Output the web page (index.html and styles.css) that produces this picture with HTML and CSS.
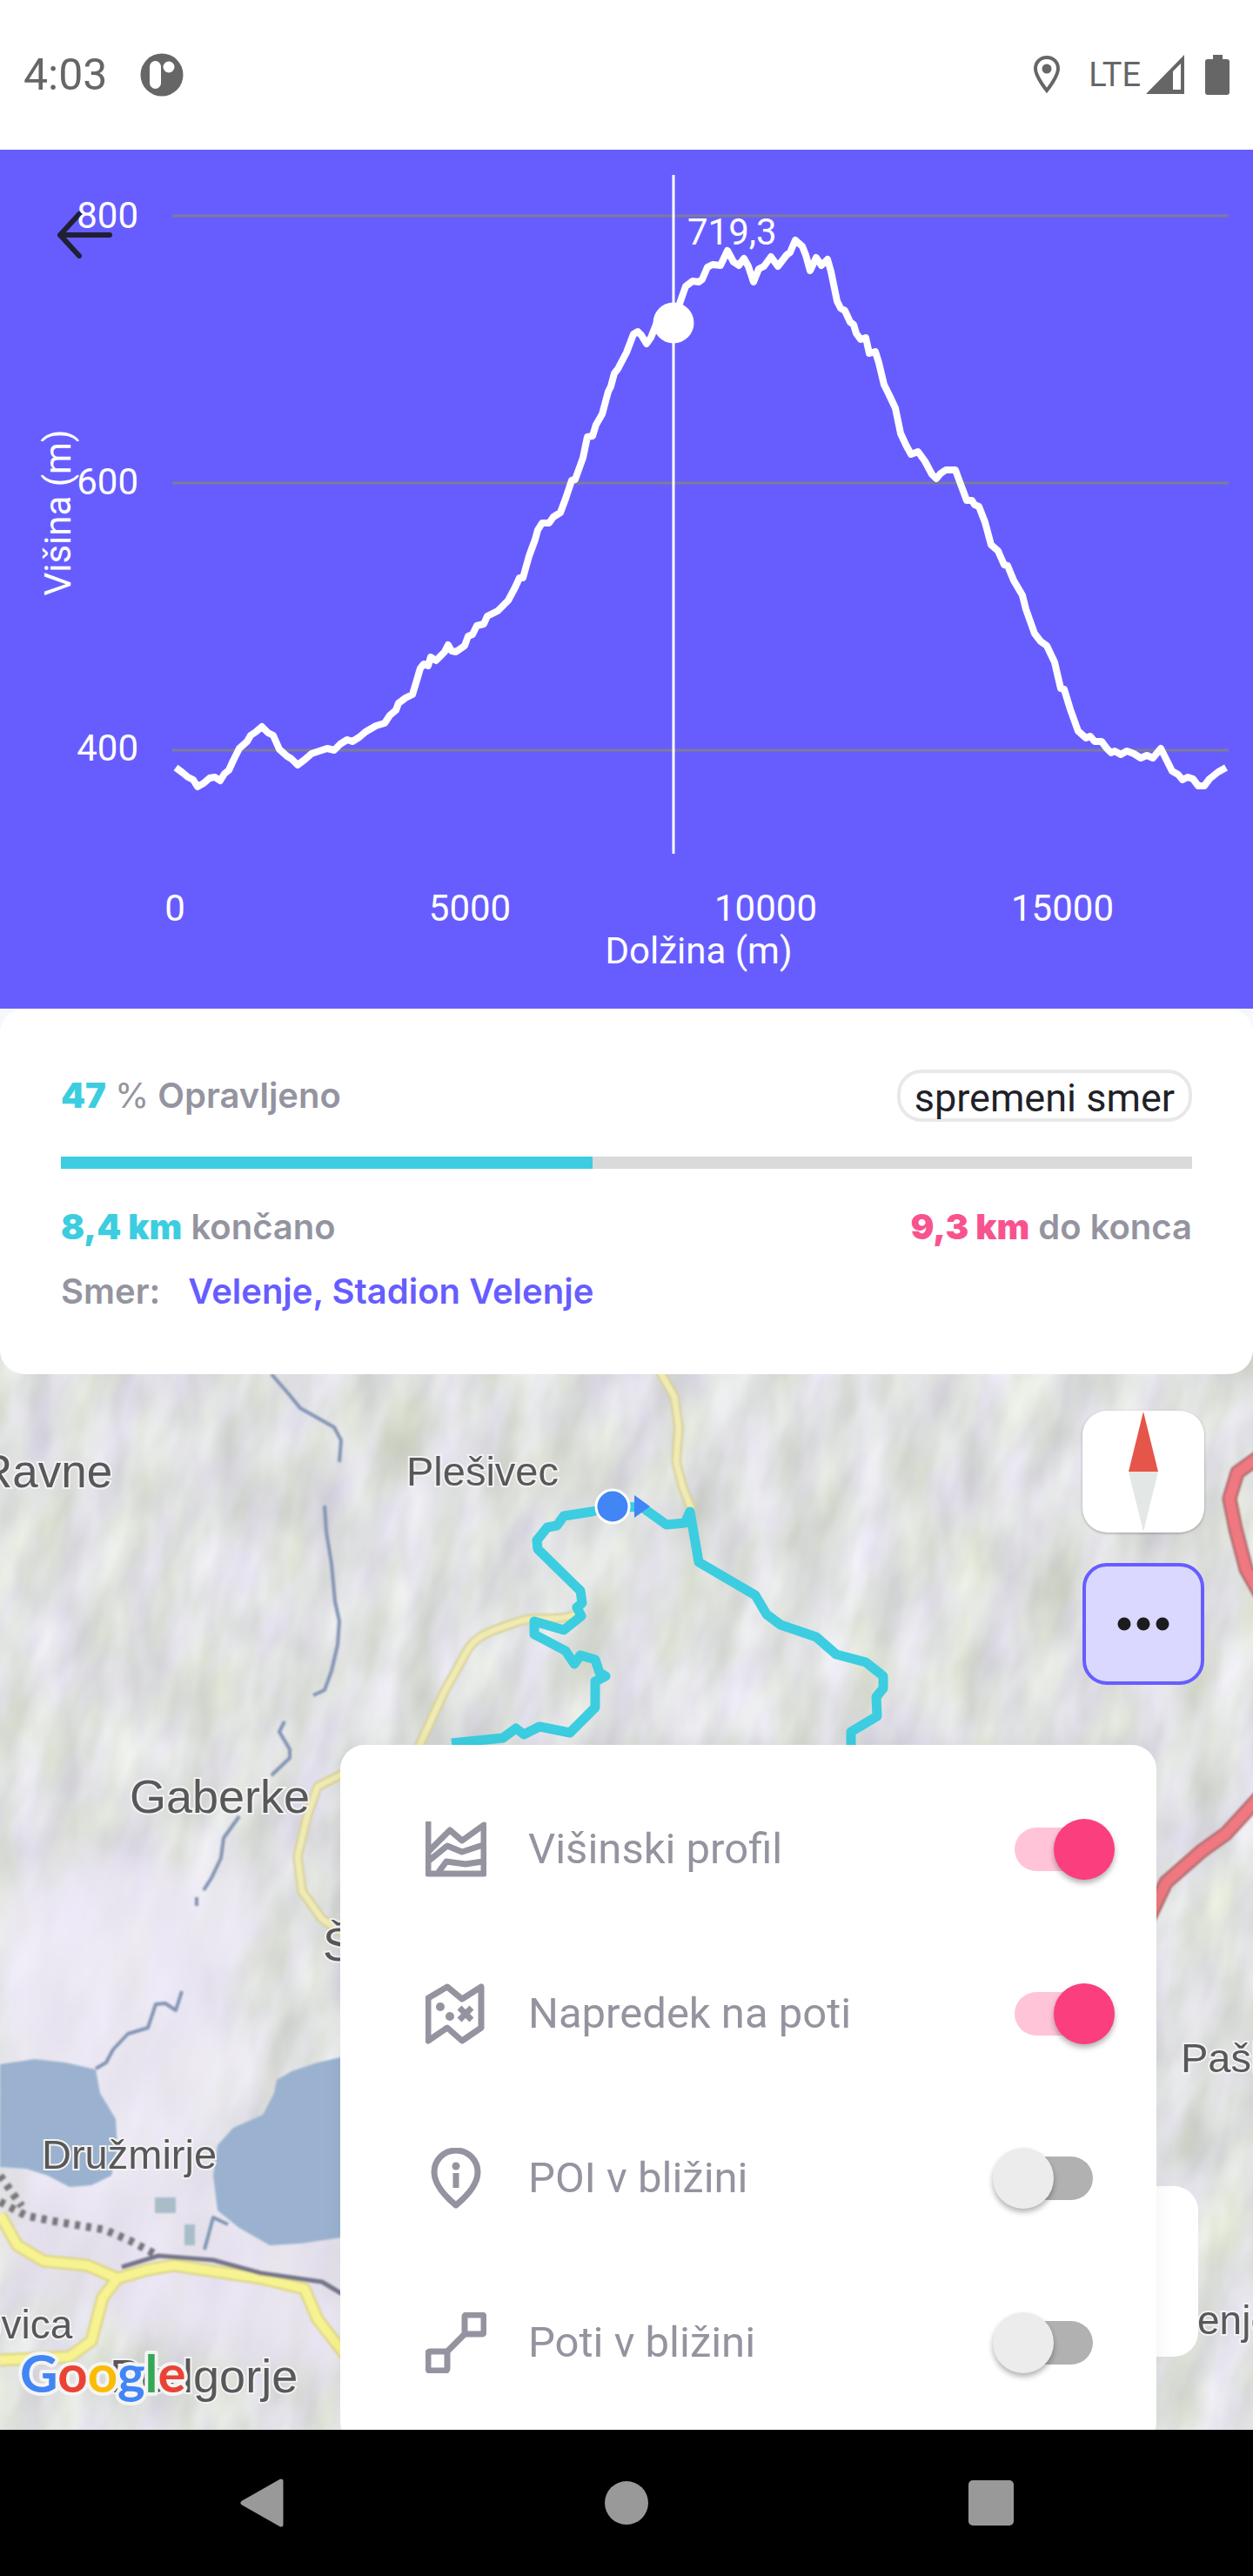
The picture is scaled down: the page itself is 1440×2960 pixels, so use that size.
FILE: index.html
```html
<!DOCTYPE html>
<html lang="sl">
  <head>
    <meta charset="UTF-8" />
    <meta name="viewport" content="width=device-width, initial-scale=1.0" />
    <title>Napredek na poti</title>
    <link rel="stylesheet" href="styles.css">
  </head>
  <body>
    <header class="status-bar">
      <span class="clock">4:03</span>
      <svg class="app-icon" width="50" height="50" viewBox="0 0 50 50">
        <circle cx="25" cy="25" r="24.5" fill="#666" />
        <rect x="11" y="9" width="13" height="32" rx="6.5" fill="#fff" />
        <circle cx="33" cy="16" r="6.5" fill="#fff" />
      </svg>
      <svg class="pin-icon" width="32" height="46" viewBox="0 0 32 46">
        <path d="M16 3C8.500 3 3 8.500 3 16c0 9 13 25 13 25s13-16 13-25C29 8.500 23.500 3 16 3z" fill="none" stroke="#666" stroke-width="4" />
        <circle cx="16" cy="16" r="5.500" fill="#666" />
      </svg>
      <span class="network">LTE</span>
      <svg class="signal-icon" width="44" height="46" viewBox="0 0 44 46">
        <path d="M44 0v45H0z" fill="#666" />
        <path d="M31 40V19l9-9v30z" fill="#fff" />
      </svg>
      <svg width="28" height="46" viewBox="0 0 28 46">
        <path d="M9 0h11v5h5q3 0 3 3v35q0 3-3 3H3q-3 0-3-3V8q0-3 3-3h6z" fill="#666" />
      </svg>
    </header>

    <section class="elevation">
      <button class="back-button" type="button" aria-label="Nazaj">
        <svg width="70" height="60" viewBox="0 0 70 60">
          <path d="M62 30H5M27 6L5 30l22 24" fill="none" stroke="#1f2033" stroke-width="6" stroke-linecap="round" stroke-linejoin="round" />
        </svg>
      </button>
      <svg class="chart" viewBox="0 172 1440 987" role="img" aria-label="Višinski profil">
        <g stroke="#7c7c98" stroke-width="3">
          <line x1="198" y1="248" x2="1412" y2="248" />
          <line x1="198" y1="555" x2="1412" y2="555" />
          <line x1="198" y1="862" x2="1412" y2="862" />
        </g>
        <g class="axis-text" text-anchor="end">
          <text x="159" y="262">800</text>
          <text x="159" y="568">600</text>
          <text x="159" y="874">400</text>
        </g>
        <g class="axis-text" text-anchor="middle">
          <text x="201" y="1058">0</text>
          <text x="540" y="1058">5000</text>
          <text x="880" y="1058">10000</text>
          <text x="1221" y="1058">15000</text>
          <text x="803" y="1107">Dolžina (m)</text>
          <text transform="translate(81 589) rotate(-90)">Višina (m)</text>
        </g>
        <polyline
          points="202,882 210,888 216,893 222,896 227,904 234,900 241,894 247,893 253,897 258,889 263,885 268,874 275,860 284,852 288,845 294,841 301,835 308,842 314,845 321,861 330,869 335,872 342,879 350,873 358,866 367,863 376,860 384,862 391,855 399,850 405,852 413,847 420,841 432,834 442,831 448,822 455,816 458,808 466,802 474,798 478,785 483,768 487,763 492,765 495,755 501,759 511,749 515,741 519,748 524,749 534,742 538,731 543,729 548,719 556,717 560,708 572,702 584,690 592,675 597,664 601,664 608,639 615,620 618,609 623,601 631,601 636,594 644,589 650,573 657,552 661,551 670,526 675,502 681,501 685,488 692,476 699,450 702,444 706,429 710,424 720,405 728,384 733,381 737,385 743,395 748,388 754,373 774,371 782,346 788,329 796,323 803,324 807,321 813,307 819,304 828,305 836,288 843,301 849,305 855,297 860,306 866,324 872,309 878,306 886,295 894,306 904,293 908,290 914,276 922,283 926,293 931,311 938,296 944,305 951,298 955,312 962,346 966,354 971,357 977,370 981,373 984,383 989,390 995,388 999,406 1006,404 1010,417 1016,442 1021,452 1029,469 1035,498 1041,511 1047,522 1055,519 1063,530 1071,545 1076,550 1081,544 1087,540 1098,540 1102,551 1111,575 1117,575 1120,580 1125,582 1132,600 1139,626 1147,633 1154,649 1158,650 1165,667 1175,684 1179,700 1189,728 1196,737 1203,742 1212,761 1219,791 1223,792 1230,815 1239,840 1248,848 1253,846 1258,852 1266,852 1272,860 1277,865 1281,863 1288,867 1295,863 1303,866 1311,871 1318,868 1325,871 1334,860 1341,874 1347,886 1354,890 1359,896 1365,893 1371,895 1377,903 1384,903 1390,895 1400,887 1409,882"
          fill="none" stroke="#fff" stroke-width="8" stroke-linejoin="round" />
        <line x1="774" y1="201" x2="774" y2="981" stroke="#fff" stroke-width="3" />
        <circle cx="774" cy="371" r="23.500" fill="#fff" />
        <text class="axis-text" x="790" y="281">719,3</text>
      </svg>
    </section>

    <section class="progress-card">
      <div class="card-row">
        <p><b class="done">47</b> <span class="percent">%</span> Opravljeno</p>
        <button class="direction-button" type="button">spremeni smer</button>
      </div>
      <div class="progress-track">
        <div class="progress-fill" style="width: 47%"></div>
      </div>
      <div class="card-row">
        <p><b class="done">8,4 km</b> končano</p>
        <p><b class="left">9,3 km</b> do konca</p>
      </div>
      <div class="card-row direction">
        <p>Smer:</p>
        <p class="target">Velenje, Stadion Velenje</p>
      </div>
    </section>

    <main class="map">
      <svg class="map-canvas" viewBox="0 1549 1440 1243" preserveAspectRatio="xMidYMid slice">
        <defs>
          <filter id="relief" x="0" y="0" width="100%" height="100%" color-interpolation-filters="sRGB">
            <feTurbulence type="fractalNoise" baseFrequency="0.022 0.009" numOctaves="3" seed="7" />
            <feColorMatrix values="0.20 0.05 0 0 0.750  0.20 0.01 0 0 0.775  0.20 0.17 0 0 0.695  0 0 0 0 1" />
          </filter>
          <filter id="soft" x="-10%" y="-10%" width="120%" height="120%">
            <feGaussianBlur stdDeviation="1.2" />
          </filter>
          <filter id="patch" x="-30%" y="-30%" width="160%" height="160%">
            <feGaussianBlur stdDeviation="22" />
          </filter>
        </defs>
        <rect x="-600" y="1200" width="2600" height="2200" filter="url(#relief)" transform="rotate(14 720 2170)" />

        <!-- valley and built-up areas -->
        <g filter="url(#patch)">
          <path d="M0 2180L90 2120 250 2150 310 2200 240 2300 300 2360 240 2480 120 2540 0 2500z" fill="#efeafa" opacity="0.7" />
          <path d="M0 2520L240 2500 400 2580V2740L230 2700 0 2620z" fill="#e9e3f3" opacity="0.7" />
        </g>

        <g filter="url(#soft)" fill="none" stroke-linejoin="round">
          <path d="M0 2372L40 2366 75 2370 110 2378 115 2405 133 2435 135 2470 128 2500 105 2511 80 2513 55 2500 30 2492 0 2490z" fill="#9ab2cf" />
          <path d="M400 2362L365 2370 335 2380 318 2390 315 2405 302 2430 268 2445 250 2465 245 2500 250 2540 275 2560 310 2580 345 2578 400 2570z" fill="#9ab2cf" />
          <path d="M235 2585L245 2548 262 2556" stroke="#7f98b5" stroke-width="4" />
          <path d="M178 2525h24v18h-24zM212 2556h12v24h-12z" fill="#a9bdc9" />

          <!-- streams -->
          <g stroke="#8494b5" stroke-width="4">
            <path d="M312 1579L332 1602 345 1618 384 1640 392 1655 390 1680M373 1730L375 1760 381 1797 385 1840 390 1863 388 1890 381 1920 373 1942 360 1948M327 1978L321 1990 333 2010 333 2020 312 2040M275 2087L257 2112 254 2135 243 2158 234 2172M226 2180v10" />
            <path d="M209 2288L202 2310 190 2302 179 2303 170 2330 147 2337 130 2355 122 2370 110 2377" />
          </g>

          <!-- minor roads -->
          <g stroke="#d5cd92" stroke-width="11">
            <path d="M755 1570L775 1605 780 1640 777 1680 785 1710 795 1735" />
            <path d="M668 1850C650 1866 625 1856 600 1862C560 1875 545 1880 535 1900L510 1945 480 2010" />
            <path d="M400 2035L365 2053 353 2087 342 2133 347 2173 370 2205 400 2225" />
          </g>
          <g stroke="#f0ebb4" stroke-width="7">
            <path d="M755 1570L775 1605 780 1640 777 1680 785 1710 795 1735" />
            <path d="M668 1850C650 1866 625 1856 600 1862C560 1875 545 1880 535 1900L510 1945 480 2010" />
            <path d="M400 2035L365 2053 353 2087 342 2133 347 2173 370 2205 400 2225" />
          </g>
          <path d="M0 2545L20 2580 50 2598 100 2603 135 2618 170 2608 200 2603 300 2618 350 2630 365 2665 400 2710M135 2618L118 2640 105 2690 80 2708 0 2712" stroke="#ddd688" stroke-width="15" />
          <path d="M0 2545L20 2580 50 2598 100 2603 135 2618 170 2608 200 2603 300 2618 350 2630 365 2665 400 2710M135 2618L118 2640 105 2690 80 2708 0 2712" stroke="#f8f391" stroke-width="10" />

          <!-- railway -->
          <path d="M0 2500L25 2535M0 2530L30 2546 60 2552 120 2562 150 2575 182 2592" stroke="#77777c" stroke-width="9" stroke-dasharray="6 7" />
          <path d="M140 2605L182 2592 245 2597 300 2612 370 2622 400 2640" stroke="#75758a" stroke-width="5" />

          <!-- main road -->
          <path d="M1450 1672L1422 1692 1413 1722 1420 1757 1432 1803 1450 1835M1450 2062L1409 2107 1381 2127 1340 2163 1320 2205" stroke="#ad6a6e" stroke-width="17" />
          <path d="M1450 1672L1422 1692 1413 1722 1420 1757 1432 1803 1450 1835M1450 2062L1409 2107 1381 2127 1340 2163 1320 2205" stroke="#f07880" stroke-width="12" />
        </g>

        <g class="place">
          <text x="-24" y="1709" font-size="53">Ravne</text>
          <text x="467" y="1707" font-size="47">Plešivec</text>
          <text x="149" y="2083" font-size="54">Gaberke</text>
          <text x="371" y="2253" font-size="54">Š</text>
          <text x="48" y="2492" font-size="47">Družmirje</text>
          <text x="-24" y="2687" font-size="46">ovica</text>
          <text x="126" y="2749" font-size="54">Podgorje</text>
          <text x="1357" y="2381" font-size="47">Paški</text>
          <text x="1376" y="2682" font-size="46">enje</text>
        </g>

        <polyline
          points="519,2003 578,1997 593,1986 602,1993 620,1984 655,1991 684,1962 684,1932 696,1926 689,1922 684,1907 667,1902 660,1912 650,1897 614,1878 614,1863 648,1873 668,1857 663,1847 669,1842 667,1828 618,1780 617,1770 629,1755 640,1753 648,1742 680,1737 704,1731 738,1732 766,1752 787,1750 793,1737 803,1795 868,1833 881,1855 897,1867 938,1881 961,1901 995,1910 1015,1926 1015,1940 1007,1950 1008,1972 978,1990 978,2020"
          fill="none" stroke="#3ccde0" stroke-width="11" stroke-linejoin="round" />
        <path d="M729 1718l18 13-18 13z" fill="#4285f4" />
        <circle cx="704" cy="1731" r="19" fill="#4285f4" stroke="#fff" stroke-width="3" />

        <text class="google" x="23" y="2749"><tspan fill="#4285f4">G</tspan><tspan fill="#ea4335">o</tspan><tspan fill="#fbbc05">o</tspan><tspan fill="#4285f4">g</tspan><tspan fill="#34a853">l</tspan><tspan fill="#ea4335">e</tspan></text>
      </svg>

      <div class="map-buttons">
        <button class="map-button" type="button" aria-label="Sever">
          <svg width="36" height="140" viewBox="0 0 36 140">
            <path d="M18 1l17 69H1z" fill="#e55549" />
            <path d="M1 70h34l-17 69z" fill="#e3e7e6" />
          </svg>
        </button>
        <button class="map-button active" type="button" aria-label="Možnosti">
          <svg width="60" height="16" viewBox="0 0 60 16" fill="#1c1c1e">
            <circle cx="8" cy="8" r="7.500" />
            <circle cx="30" cy="8" r="7.500" />
            <circle cx="52" cy="8" r="7.500" />
          </svg>
        </button>
      </div>

      <div class="zoom-panel"></div>

      <div class="layers">
        <div class="layer">
          <svg width="70" height="70" viewBox="0 0 70 70">
            <path d="M3 3v60h64V7L42 25 28 13 4 37M4 48l21-17 17 7 24-8M15 61l9-12 22 3 20-3" />
          </svg>
          <label for="profile">Višinski profil</label>
          <input class="switch" type="checkbox" id="profile" checked />
        </div>
        <div class="layer">
          <svg width="70" height="70" viewBox="0 0 70 70">
            <path d="M3 17L25 4l17 14L64 4v47L42 66 25 51 3 66z" />
            <path d="M39 28l14 14M53 28L39 42" />
            <g class="solid">
              <circle cx="17" cy="27" r="5" />
              <circle cx="28" cy="38" r="5" />
            </g>
          </svg>
          <label for="progress">Napredek na poti</label>
          <input class="switch" type="checkbox" id="progress" checked />
        </div>
        <div class="layer">
          <svg width="70" height="70" viewBox="0 0 70 70">
            <path d="M35 3C21 3 10 14 10 28c0 15 13 28 25 38 12-10 25-23 25-38C60 14 49 3 35 3z" />
            <path d="M35 29v17" />
            <circle class="solid" cx="35" cy="21" r="4.500" />
          </svg>
          <label for="poi">POI v bližini</label>
          <input class="switch" type="checkbox" id="poi" />
        </div>
        <div class="layer">
          <svg width="70" height="70" viewBox="0 0 70 70">
            <rect x="45" y="3" width="22" height="22" rx="2" />
            <rect x="3" y="45" width="22" height="22" rx="2" />
            <path d="M23 47l24-24" />
          </svg>
          <label for="paths">Poti v bližini</label>
          <input class="switch" type="checkbox" id="paths" />
        </div>
      </div>
    </main>

    <nav class="system-nav">
      <button type="button" aria-label="Nazaj">
        <svg width="50" height="56" viewBox="0 0 50 56">
          <path d="M47 3v50L3 28z" fill="#999" stroke="#999" stroke-width="5" stroke-linejoin="round" />
        </svg>
      </button>
      <button type="button" aria-label="Domov">
        <svg width="50" height="50" viewBox="0 0 50 50">
          <circle cx="25" cy="25" r="25" fill="#999" />
        </svg>
      </button>
      <button type="button" aria-label="Nedavno">
        <svg width="52" height="52" viewBox="0 0 52 52">
          <rect width="52" height="52" rx="5" fill="#999" />
        </svg>
      </button>
    </nav>
  </body>
</html>
```
FILE: styles.css
```css
* {
  box-sizing: border-box;
}

body {
  margin: 0;
  min-height: 100vh;
  display: flex;
  flex-direction: column;
  background-color: #f6f8fb;
  font-family: Roboto, sans-serif;
}

button {
  padding: 0;
  border: none;
  background: none;
  font-family: inherit;
  cursor: pointer;
}

p {
  margin: 0;
}

svg {
  display: block;
}

/* Status bar */
.status-bar {
  display: flex;
  align-items: center;
  height: 172px;
  padding: 0 27px;
  background-color: #fff;
  color: #666;
}

.clock {
  font-size: 50px;
}

.app-icon {
  margin-left: 38px;
}

.pin-icon {
  margin-left: auto;
}

.network {
  margin-left: 32px;
  font-size: 38px;
}

.signal-icon {
  margin: 0 24px 0 6px;
}

/* Elevation chart */
.elevation {
  position: relative;
  background-color: #675dff;
}

.back-button {
  position: absolute;
  top: 68px;
  left: 64px;
}

.chart {
  position: relative;
  width: 100%;
  pointer-events: none;
}

.axis-text {
  fill: #fff;
  font-size: 42px;
}

/* Progress card */
.progress-card {
  position: relative;
  z-index: 1;
  padding: 70px;
  background-color: #fff;
  border-radius: 28px;
  color: #9494a0;
  font-family: Inter, sans-serif;
  font-size: 40px;
  font-weight: 600;
  line-height: 50px;
}

.card-row {
  display: flex;
  align-items: center;
  justify-content: space-between;
}

.done {
  color: #3ccde0;
}

.left {
  color: #f8538f;
}

.percent {
  font-weight: 400;
}

.direction-button {
  height: 60px;
  padding: 4px 16px 0;
  border: 4px solid #e8e8e8;
  border-radius: 28px;
  color: #1f2128;
  font-family: Roboto, sans-serif;
  font-size: 45px;
  line-height: 50px;
}

.progress-track {
  height: 14px;
  margin: 40px 0 42px;
  background-color: #dadada;
}

.progress-fill {
  height: 100%;
  background-color: #3ccde0;
}

.direction {
  justify-content: flex-start;
  gap: 32px;
  margin-top: 24px;
}

.target {
  color: #675dff;
}

/* Map, slides under the rounded corners of the card */
.map {
  position: relative;
  flex: 1;
  min-height: 1200px;
  margin-top: -30px;
  overflow: hidden;
  background-color: #e3e4e3;
}

.map-canvas {
  position: absolute;
  width: 100%;
  height: 100%;
}

.place {
  fill: #58585a;
  stroke: #f3f2f2;
  stroke-width: 4px;
  paint-order: stroke;
  font-family: "Liberation Sans", sans-serif;
}

.google {
  stroke: #f4f4f4;
  stroke-width: 8px;
  stroke-linejoin: round;
  paint-order: stroke;
  font-family: Lato, sans-serif;
  font-size: 60px;
  font-weight: 700;
}

.map-buttons {
  position: absolute;
  top: 72px;
  right: 56px;
  display: flex;
  flex-direction: column;
  gap: 35px;
}

.map-button {
  display: flex;
  align-items: center;
  justify-content: center;
  width: 140px;
  height: 140px;
  border-radius: 28px;
  background-color: #fff;
  box-shadow: 0 1px 3px rgba(0, 0, 0, 0.3);
}

.map-button.active {
  border: 4px solid #675dff;
  background-color: #dad8ff;
  box-shadow: none;
}

.zoom-panel {
  position: absolute;
  right: 63px;
  bottom: 84px;
  width: 140px;
  height: 196px;
  border-radius: 28px;
  background-color: #fff;
}

.layers {
  position: absolute;
  top: 456px;
  right: 111px;
  left: 391px;
  padding: 25px 0;
  border-radius: 28px;
  background-color: #fff;
  box-shadow: 0 0 24px rgba(0, 0, 0, 0.06);
}

.layer {
  display: flex;
  align-items: center;
  height: 189px;
  padding: 0 73px 0 98px;
  color: #9494a0;
  font-size: 49px;
}

.layer svg {
  fill: none;
  stroke: #9494a0;
  stroke-width: 7px;
  stroke-linejoin: round;
}

.layer .solid {
  fill: #9494a0;
  stroke: none;
}

.layer label {
  flex: 1;
  margin-left: 48px;
}

.switch {
  appearance: none;
  position: relative;
  width: 90px;
  height: 50px;
  margin: 0;
  border-radius: 25px;
  background-color: #b1b1b1;
}

.switch::before {
  content: "";
  position: absolute;
  top: -10px;
  left: -25px;
  width: 70px;
  height: 70px;
  border-radius: 50%;
  background-color: #ececec;
  box-shadow: 0 4px 6px rgba(0, 0, 0, 0.3);
}

.switch:checked {
  background-color: #ffc4d8;
}

.switch:checked::before {
  left: 45px;
  background-color: #fb3e7e;
}

/* Android navigation */
.system-nav {
  display: grid;
  grid-template-columns: repeat(3, 1fr);
  height: 168px;
  padding: 0 92px;
  background-color: #000;
}

.system-nav button {
  display: flex;
  align-items: center;
  justify-content: center;
}
```
